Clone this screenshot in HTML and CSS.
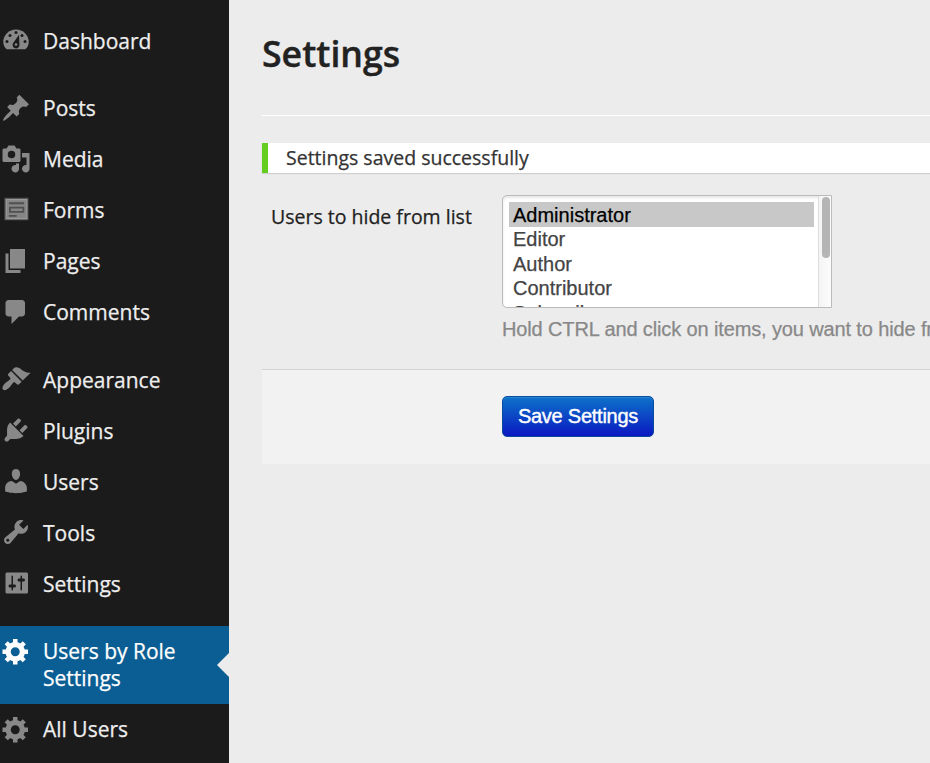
FILE: index.html
```
<!DOCTYPE html>
<html lang="en">
<head>
<meta charset="utf-8">
<title>Settings</title>
<link rel="stylesheet" href="styles.css">
</head>
<body>
<div class="layout">
<nav class="menu">
<a class="item low"><svg class="icon" viewBox="0 0 20 20"><path fill-rule="evenodd" d="M3.76 16.2h12.48c1.5-1.3 2.26-3 2.26-4.9a8.5 8.3 0 0 0-17 0c0 1.9.8 3.6 2.26 4.9z"/><g class="hole"><circle cx="10" cy="5" r="1"/><circle cx="6" cy="7" r="1"/><circle cx="14" cy="7" r="1"/><circle cx="4" cy="11" r="1"/><circle cx="16" cy="11" r="1"/><path d="M12 6.500l.3 6.500a2.300 2.300 0 1 1-4.300-.8z"/></g><circle cx="10" cy="13" r=".9"/></svg><span>Dashboard</span></a>
<a class="item group"><svg class="icon" viewBox="0 0 20 20"><path d="M10.440 3.020l1.820-1.820 6.360 6.350-1.830 1.820c-1.050-.68-2.480-.57-3.410.36l-.75.75c-.92.93-1.040 2.350-.35 3.410l-1.830 1.820-2.410-2.410-2.800 2.790c-.42.42-3.380 2.710-3.800 2.290s1.860-3.390 2.280-3.810l2.790-2.790L4.100 9.360l1.830-1.820c1.050.69 2.480.57 3.400-.36l.75-.75c.93-.92 1.050-2.350.36-3.410z"/></svg><span>Posts</span></a>
<a class="item"><svg class="icon" viewBox="0 0 20 20"><path fill-rule="evenodd" d="M13 11V4c0-.55-.45-1-1-1h-1.670L9 1H5L3.670 3H2c-.55 0-1 .45-1 1v7c0 .55.45 1 1 1h10c.55 0 1-.45 1-1zM7 4.500a2.500 2.500 0 1 1 0 5 2.500 2.500 0 0 1 0-5zM14 6h5v10.500a2.500 2.500 0 1 1-2-2.450V9h-3V6zm-4 8.050V13h2v3.500a2.500 2.500 0 1 1-2-2.450z"/></svg><span>Media</span></a>
<a class="item"><svg class="icon" viewBox="0 0 20 20"><g transform="translate(0 .6)"><path class="form-edge" d="M2.300 1.300h16v15h-16z"/><path class="form-face" d="M3.500 2.500h13.700v12.700H3.500z"/><path class="form-line" d="M5.300 4.900h10M6 7.800h8.900v2.800H6zM5.300 13.300h5.200"/></g></svg><span>Forms</span></a>
<a class="item"><svg class="icon" viewBox="0 0 20 20"><path d="M6 15V2h10v13H6zm-1 1h8v2H3V5h2v11z"/></svg><span>Pages</span></a>
<a class="item"><svg class="icon" viewBox="0 0 20 20"><path d="M5 2h9c1.100 0 2 .9 2 2v7c0 1.100-.9 2-2 2h-2l-5 5v-5H5c-1.100 0-2-.9-2-2V4c0-1.100.9-2 2-2z"/></svg><span>Comments</span></a>
<a class="item group low"><svg class="icon" viewBox="0 0 20 20"><path d="M14.480 11.060L7.410 3.990l1.500-1.500c.5-.56 2.300-.47 3.510.32 1.210.8 1.430 1.280 2.910 2.100 1.180.64 2.450 1.260 4.450.85zm-.71.71L6.700 4.700 4.930 6.470c-.39.39-.39 1.020 0 1.410l1.060 1.060c.39.39.39 1.030 0 1.420-.6.6-1.430 1.110-2.210 1.690-.35.26-.7.53-1.010.84C1.430 14.230.4 16.080 1.400 17.070c.99 1 2.840-.03 4.180-1.360.31-.31.58-.66.85-1.020.57-.78 1.080-1.610 1.690-2.210.39-.39 1.020-.39 1.410 0l1.060 1.060c.39.39 1.020.39 1.410 0z"/></svg><span>Appearance</span></a>
<a class="item low"><svg class="icon" viewBox="0 0 20 20"><path d="M13.110 4.360L9.870 7.600 8 5.730l3.240-3.240c.35-.34 1.050-.2 1.560.32.52.51.66 1.210.31 1.550zm-8 1.770l.91-1.120 9.010 9.010-1.190.84c-.71.71-2.630 1.160-3.820 1.160H6.140L4.900 17.260c-.59.59-1.540.59-2.120 0-.59-.58-.59-1.530 0-2.120l1.240-1.240v-3.880c0-1.130.4-3.190 1.090-3.890zm7.260 3.970l3.240-3.240c.34-.35 1.040-.21 1.550.31.52.51.66 1.210.31 1.550l-3.240 3.250z"/></svg><span>Plugins</span></a>
<a class="item low"><svg class="icon" viewBox="0 0 20 20"><path d="M10 9.250c-2.270 0-2.730-3.440-2.730-3.440C7 4.020 7.820 2 9.970 2c2.160 0 2.980 2.020 2.710 3.810 0 0-.41 3.440-2.680 3.440zm0 2.570L12.720 10c2.390 0 4.520 2.330 4.520 4.530v2.490s-3.650 1.130-7.240 1.130c-3.650 0-7.240-1.130-7.240-1.130v-2.490c0-2.250 1.940-4.480 4.470-4.480z"/></svg><span>Users</span></a>
<a class="item low"><svg class="icon" viewBox="0 0 20 20"><path fill-rule="evenodd" d="M16.680 9.770c-1.340 1.340-3.300 1.670-4.950.99l-5.410 6.520c-.99.99-2.590.99-3.580 0s-.99-2.590 0-3.570l6.520-5.420c-.68-1.650-.35-3.610.99-4.950 1.280-1.280 3.120-1.620 4.720-1.060l-2.890 2.890 2.820 2.820 2.860-2.870c.53 1.580.18 3.390-1.080 4.650zM3.810 16.210c.4.39 1.040.39 1.430 0 .4-.4.4-1.040 0-1.430-.39-.4-1.030-.4-1.430 0-.39.39-.39 1.030 0 1.430z"/></svg><span>Tools</span></a>
<a class="item low"><svg class="icon" viewBox="0 0 20 20"><path fill-rule="evenodd" d="M18 16V4c0-.55-.45-1-1-1H4c-.55 0-1 .45-1 1v12c0 .55.45 1 1 1h13c.55 0 1-.45 1-1zM8 11h1c.55 0 1 .45 1 1s-.45 1-1 1H8v1.500c0 .28-.22.5-.5.5s-.5-.22-.5-.5V13H6c-.55 0-1-.45-1-1s.45-1 1-1h1V5.500c0-.28.22-.5.5-.5s.5.22.5.5V11zm5-2h-1c-.55 0-1-.45-1-1s.45-1 1-1h1V5.500c0-.28.22-.5.5-.5s.5.22.5.5V7h1c.55 0 1 .45 1 1s-.45 1-1 1h-1v5.500c0 .28-.22.5-.5.5s-.5-.22-.5-.5V9z"/></svg><span>Settings</span></a>
<a class="item current"><svg class="icon" viewBox="0 0 20 20"><path id="gear" fill-rule="evenodd" d="M18 12h-2.180c-.17.7-.44 1.350-.81 1.930l1.540 1.540-2.100 2.100-1.540-1.540c-.58.36-1.230.63-1.910.79V19H8v-2.180c-.68-.16-1.330-.43-1.910-.79l-1.540 1.540-2.120-2.120 1.540-1.540c-.36-.58-.63-1.230-.79-1.910H1V9.030h2.170c.16-.7.44-1.350.8-1.940L2.430 5.550l2.100-2.100 1.540 1.540c.58-.37 1.240-.64 1.930-.81V2h3v2.180c.68.16 1.330.43 1.910.79l1.540-1.540 2.120 2.120-1.540 1.540c.36.59.64 1.240.8 1.940H18V12zm-8.500 1.500c1.660 0 3-1.340 3-3s-1.340-3-3-3-3 1.340-3 3 1.340 3 3 3z"/></svg><span>Users by Role<br>Settings</span></a>
<a class="item"><svg class="icon" viewBox="0 0 20 20"><use href="#gear"/></svg><span>All Users</span></a>
</nav>
<main class="content">
<h1>Settings</h1>
<div class="notice">Settings saved successfully</div>
<div class="field">
<label>Users to hide from list</label>
<div class="control">
<div class="listbox">
<ul><li class="selected">Administrator</li><li>Editor</li><li>Author</li><li>Contributor</li><li>Subscriber</li></ul>
<div class="scroll"><div class="thumb"></div></div>
</div>
<p class="hint">Hold CTRL and click on items, you want to hide from list</p>
</div>
</div>
<div class="actions"><button>Save Settings</button></div>
</main>
</div>
</body>
</html>
```

FILE: styles.css
```
* { box-sizing: border-box; }
body {
  margin: 0;
  height: 763px;
  overflow: hidden;
  background: #ececec;
  font-family: "Open Sans", sans-serif;
  color: #222;
  -webkit-text-stroke: .25px;
}
.layout { display: flex; height: 763px; }
.menu {
  flex: 0 0 229px;
  padding-top: 16px;
  background: #1b1b1b;
}
.item {
  position: relative;
  display: flex;
  padding: 12px 0;
  font-size: 21px;
  line-height: 27px;
  color: #eee;
}
.group { margin-top: 16px; }
.group.low { margin-top: 17px; }
.icon {
  flex: none;
  width: 30px;
  height: 30px;
  margin: -2px 12.5px -3px .5px;
  fill: #888;
}
.low .icon { margin-top: -3px; }
.hole { fill: #1b1b1b; }
.form-edge { fill: #555; }
.form-face { fill: #858585; stroke: #999; stroke-width: .8; }
.form-line { fill: none; stroke: #505050; stroke-width: 1.2; }
.current { margin-top: 16px; background: #0b5e93; color: #fff; }
.current .icon { fill: #fff; }
.current::after {
  content: "";
  position: absolute;
  right: 0;
  top: 27px;
  border: 12px solid transparent;
  border-left: 0;
  border-right-color: #ececec;
}
.content { flex: 1; min-width: 0; padding-left: 33px; overflow: hidden; }
h1 {
  margin: 0 0 27px;
  height: 116px;
  padding-top: 29px;
  border-bottom: 1px solid #fff;
  font-size: 35.7px;
  line-height: 48px;
  font-weight: 600;
  -webkit-text-stroke: .4px;
}
.notice {
  height: 30px;
  padding-left: 18px;
  border-left: 6px solid #65cd20;
  background: #fff;
  box-shadow: 0 1px 1px rgba(0, 0, 0, .12);
  font-size: 19.5px;
  line-height: 30px;
  color: #333;
}
.field { display: flex; height: 196px; padding-top: 22px; }
label {
  flex: 0 0 240px;
  padding: 7px 0 0 9px;
  font-size: 19.5px;
  line-height: 30px;
}
.control, button { font-family: "Liberation Sans", Arial, sans-serif; }
.control { min-width: 0; white-space: nowrap; }
.listbox {
  display: flex;
  width: 330px;
  height: 113px;
  border: 1px solid #bbb;
  border-radius: 5px 0 0 5px;
  background: #fff;
  box-shadow: inset 0 2px 3px rgba(0, 0, 0, .1);
  overflow: hidden;
}
ul { flex: 1; margin: 0; padding: 6px 4px 0 6px; list-style: none; }
li {
  height: 24.4px;
  padding-left: 4px;
  font-size: 20px;
  line-height: 27px;
  color: #444;
}
.selected { height: 25px; margin-bottom: -.6px; background: #c8c8c8; color: #000; }
.scroll {
  width: 13px;
  padding: 1px 1px 0 3px;
  border-left: 1px solid #ddd;
  background: linear-gradient(90deg, #f4f4f4, #fcfcfc);
}
.thumb { width: 8px; height: 61px; border-radius: 4px; background: #b5b5b5; }
.hint {
  margin: 8px 0 0;
  font-size: 20px;
  line-height: 26px;
  letter-spacing: -.13px;
  color: #888;
}
.actions {
  height: 95px;
  padding: 26px 0 0 240px;
  border-top: 1px solid #d2d2d2;
  background: #f2f2f2;
}
button {
  display: block;
  width: 152px;
  height: 41px;
  padding: 0;
  border: 1px solid #0a4a9c;
  border-radius: 5px;
  background: linear-gradient(#0d72c9, #0b19c2);
  box-shadow: inset 0 1px 0 #2487d2;
  font-size: 20px;
  letter-spacing: -.25px;
  color: #fff;
  -webkit-text-stroke: .4px;
}
```
